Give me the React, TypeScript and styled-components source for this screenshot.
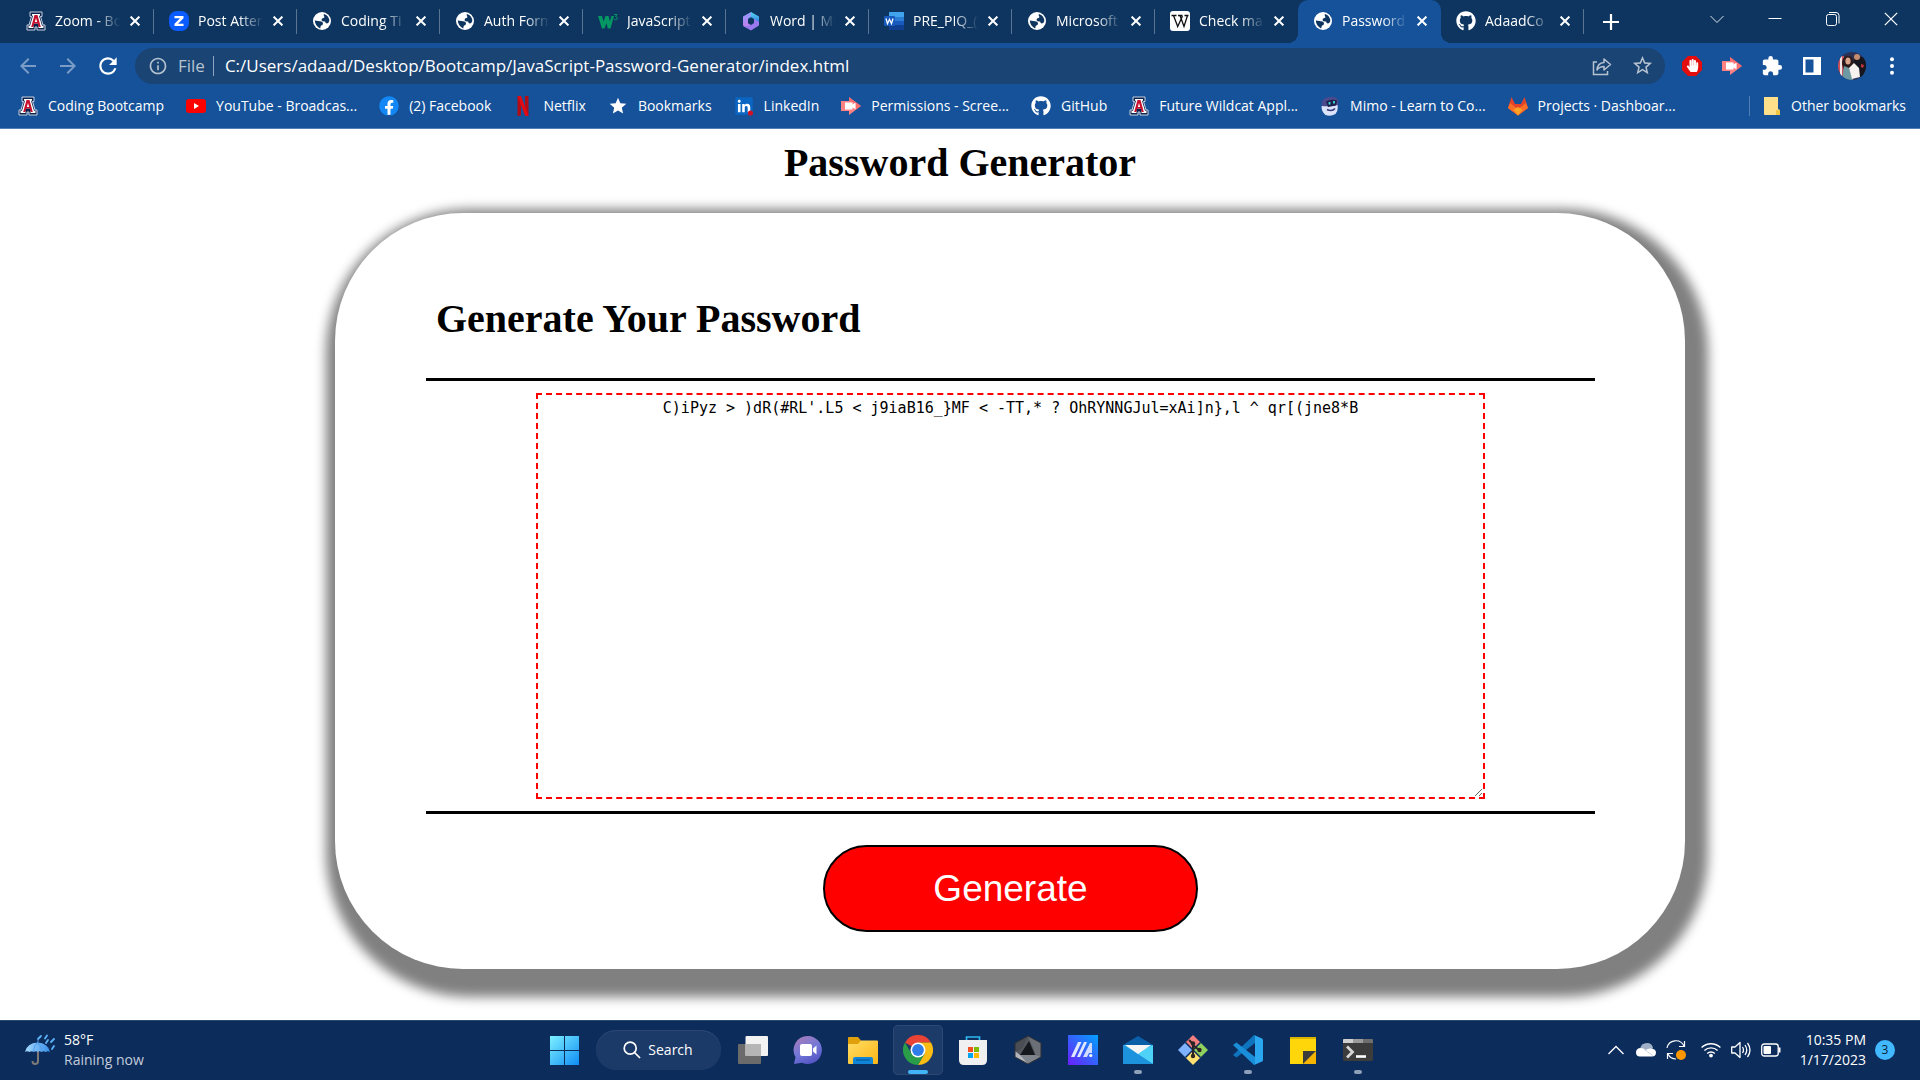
import React, { useState } from "react";
import styled, { createGlobalStyle, css } from "styled-components";
import { MdArrowBack, MdArrowForward, MdRefresh, MdInfoOutline, MdStarBorder, MdStar, MdExtension } from "react-icons/md";
import { FaGithub, FaFacebook, FaLinkedin, FaHandPaper } from "react-icons/fa";

const ui = `"Open Sans", "Noto Sans", sans-serif`;
const serif = `"Liberation Serif", "Times New Roman", serif`;

const GlobalStyle = createGlobalStyle`
  * { box-sizing: border-box; }
  body { margin: 0; background: #fff; font-family: ${ui}; }
  button { font: inherit; color: inherit; background: none; border: 0; padding: 0; }
  a { color: inherit; text-decoration: none; }
  svg { display: block; flex: none; }
`;

const Screen = styled.div`
  display: flex;
  flex-direction: column;
  min-height: 100vh;
`;

/* ---------- browser frame ---------- */

const Browser = styled.header`
  color: #fff;
  background: #15529a;
  border-bottom: 1px solid #4f7fb5;
`;

const TabStrip = styled.div`
  display: flex;
  align-items: flex-start;
  height: 43px;
  padding-left: 11px;
  background: #0d355f;
`;

const Tab = styled.div<{ $active?: boolean; $divider: boolean }>`
  position: relative;
  display: flex;
  align-items: center;
  flex: 0 1 143px;
  min-width: 0;
  height: 43px;
  padding: 0 9px 2px 15px;
  border-radius: 10px 10px 0 0;
  font-size: 14px;
  line-height: 20px;
  ${(p) =>
    p.$divider &&
    css`
      background: linear-gradient(#5a7593, #5a7593) right center / 1px 25px no-repeat;
    `}
  ${(p) =>
    p.$active &&
    css`
      background: #15529a;
      &::before,
      &::after {
        content: "";
        position: absolute;
        bottom: 0;
        width: 10px;
        height: 10px;
      }
      &::before {
        left: -10px;
        background: radial-gradient(circle at 0 0, transparent 10px, #15529a 10px);
      }
      &::after {
        right: -10px;
        background: radial-gradient(circle at 100% 0, transparent 10px, #15529a 10px);
      }
    `}
`;

const TabTitle = styled.button`
  display: flex;
  align-items: center;
  gap: 9px;
  flex: 1;
  min-width: 0;
  text-align: left;
`;

const TabText = styled.span`
  flex: 1;
  min-width: 0;
  overflow: hidden;
  white-space: nowrap;
  mask-image: linear-gradient(90deg, #000 60%, transparent 96%);
`;

const CloseButton = styled.button`
  display: grid;
  place-items: center;
  width: 20px;
  height: 20px;
  margin-left: 2px;
`;

const NewTab = styled.button`
  display: grid;
  place-items: center;
  width: 36px;
  height: 43px;
  margin-left: 9px;
`;

const WindowControls = styled.div`
  display: flex;
  margin-left: auto;
`;

const WindowButton = styled.button`
  display: grid;
  place-items: center;
  width: 58px;
  height: 37px;
`;

const Toolbar = styled.div`
  display: flex;
  align-items: center;
  height: 45px;
  padding: 0 8px;
`;

const ToolButton = styled.button<{ $dim?: boolean }>`
  display: grid;
  place-items: center;
  width: 40px;
  height: 36px;
  color: ${(p) => (p.$dim ? "#7a9cc6" : "#fff")};
`;

const Omnibox = styled.form`
  display: flex;
  align-items: center;
  flex: 1;
  height: 36px;
  margin: 0 7px;
  padding: 0 3px 0 13px;
  border-radius: 18px;
  background: #1a4474;
  color: #b6c2d0;
  font-size: 17px;
`;

const Scheme = styled.span`
  margin-left: 10px;
  padding-right: 8px;
  border-right: 1px solid #8fa5bf;
  line-height: 20px;
`;

const Address = styled.input`
  flex: 1;
  min-width: 0;
  height: 28px;
  padding: 0 0 0 11px;
  border: 0;
  outline: 0;
  background: transparent;
  color: #fff;
  font: 17px/28px ${ui};
`;

const BookmarkBar = styled.nav`
  display: flex;
  align-items: center;
  gap: 22px;
  height: 40px;
  padding: 0 14px 4px 18px;
  font-size: 14px;
  line-height: 20px;
`;

const Bookmark = styled.a`
  display: flex;
  align-items: center;
  gap: 10px;
  white-space: nowrap;
`;

const OtherBookmarks = styled(Bookmark)`
  margin-left: auto;
  padding-left: 13px;
  border-left: 1px solid #4f7fb5;
`;

/* ---------- web page ---------- */

const Page = styled.main`
  flex: 1;
  overflow: hidden;
  padding: 11px 0 51px;
  color: #000;
`;

const Title = styled.h1`
  margin: 0;
  font: bold 40px/46px ${serif};
  text-align: center;
`;

const Card = styled.section`
  margin: 27px 235px 0 335px;
  padding: 83px 90px 37px 91px;
  border-radius: 128px;
  background: #fff;
  box-shadow: 7px 12px 12px 16px #808080;
`;

const CardTitle = styled.h2`
  margin: 0 0 36px;
  padding-left: 10px;
  font: bold 40px/46px ${serif};
`;

const Rule = styled.hr`
  height: 3px;
  margin: 0;
  border: 0;
  background: #000;
`;

const PasswordBox = styled.div`
  display: flex;
  padding: 12px 110px;
`;

const PasswordArea = styled.textarea`
  flex: 1;
  min-width: 0;
  height: 406px;
  padding: 3px;
  border: 2px dashed #f00;
  outline: 0;
  background: #fff;
  color: #000;
  font: 15px/20px "DejaVu Sans Mono", "Liberation Mono", monospace;
  text-align: center;
`;

const Actions = styled.div`
  display: flex;
  justify-content: center;
  padding-top: 31px;
`;

const GenerateButton = styled.button`
  width: 375px;
  height: 87px;
  border: 2px solid #000;
  border-radius: 44px;
  background: #f00;
  color: #fff;
  font: 37px/44px "Liberation Sans", Arial, sans-serif;
`;

/* ---------- taskbar ---------- */

const Taskbar = styled.footer`
  display: grid;
  grid-template-columns: 1fr auto 1fr;
  align-items: center;
  height: 60px;
  box-shadow: inset 0 1px 0 #274b6e;
  background: #0c2c5c;
  color: #fff;
  font-size: 14px;
  line-height: 20px;
`;

const Weather = styled.button`
  display: flex;
  align-items: center;
  gap: 8px;
  padding-left: 24px;
  text-align: left;
`;

const Muted = styled.span`
  display: block;
  color: #c3cddb;
`;

const Dock = styled.nav`
  display: flex;
  align-items: center;
  gap: 5px;
  padding-left: 1px;
`;

const DockButton = styled.button<{ $active?: boolean }>`
  position: relative;
  display: grid;
  place-items: center;
  width: 50px;
  height: 50px;
  border-radius: 5px;
  ${(p) =>
    p.$active &&
    css`
      background: #1d3b69;
      box-shadow: inset 0 0 0 1px #2b4873;
    `}
`;

const Indicator = styled.span<{ $active?: boolean }>`
  position: absolute;
  bottom: 1px;
  left: 50%;
  width: ${(p) => (p.$active ? 20 : 8)}px;
  height: 4px;
  border-radius: 2px;
  background: ${(p) => (p.$active ? "#41b5f8" : "#8e9fb9")};
  transform: translateX(-50%);
`;

const Search = styled.button`
  display: flex;
  align-items: center;
  justify-content: center;
  gap: 7px;
  width: 125px;
  height: 40px;
  margin: 0 2px;
  border-radius: 20px;
  background: #1c3a68;
  box-shadow: inset 0 1px 0 #2b4873;
`;

const Tray = styled.div`
  display: flex;
  align-items: center;
  justify-content: flex-end;
  padding-right: 25px;
`;

const TrayButton = styled.button`
  display: grid;
  place-items: center;
  width: 30px;
  height: 40px;
`;

const TrayGroup = styled.div`
  display: flex;
  margin-left: 5px;
`;

const Clock = styled.time`
  min-width: 80px;
  text-align: right;
`;

const Badge = styled.span`
  display: grid;
  place-items: center;
  width: 20px;
  height: 20px;
  margin-left: 9px;
  border-radius: 50%;
  background: #41b8ff;
  color: #0a2238;
  font-size: 12px;
`;

/* ---------- drawings ---------- */

const WildcatIcon = () => (
  <svg width="20" height="20" viewBox="0 0 20 20">
    <path d="M4 1h12v4.500h-1.500L17 14h2v5h-8v-3H9v3H1v-5h2l2.500-8.500H4z" fill="#0c234b" stroke="#c9d3e2" strokeWidth="1" />
    <path d="M6 3h8v1.800h-1l3 10h1.500v2.200h-5v-2.200h.6l-.6-2.200H7.500l-.6 2.200h.6V17h-5v-2.200H4l3-10H6z" fill="#fff" />
    <path d="M8.500 4h3l3.300 12h-2l-1-3.600H8.200L7.200 16h-2zM10 7l-1.200 4h2.400z" fill="#c8102e" />
  </svg>
);

const GlobeIcon = () => (
  <svg width="20" height="20" viewBox="0 0 20 20">
    <circle cx="10" cy="10" r="9" fill="#fff" />
    <path d="M2.800 9.600L8 10.300q3 .4 3 2.500 0 1.600-2.200 2l-.6 2.600Q3.200 15.500 2.800 9.600z" fill="#0d355f" />
    <path d="M12 3q5 1.500 5.300 7-.6 2.300-2.300 2.400-1.700-.2-1.900-2-3.300.2-3.600-1.500.1-1.700 2-1.900 1.700-.4.500-2-.8-1 0-2z" fill="#0d355f" />
  </svg>
);

const ZoomIcon = () => (
  <svg width="20" height="20" viewBox="0 0 20 20">
    <rect width="20" height="20" rx="8" fill="#0b5cff" />
    <path d="M5.500 5h9v2.300l-5.500 5.400h5.500V15h-9v-2.300L11 7.300H5.500z" fill="#fff" />
  </svg>
);

const W3Icon = () => (
  <svg width="20" height="20" viewBox="0 0 20 20">
    <path d="M0 5h4l1.500 5.500L7.500 5h3l1.500 5.500L13.500 5H16l-3.500 12.500h-2.700L8.500 12l-2 5.500H4z" fill="#059862" />
    <path d="M16 3.500h3l-1.500 2q1.800.2 1.800 1.800-.1 1.500-1.800 1.500-1 0-1.600-.7" fill="none" stroke="#059862" strokeWidth="1" />
  </svg>
);

const OfficeIcon = () => (
  <svg width="20" height="20" viewBox="0 0 20 20">
    <defs>
      <linearGradient id="office-a" x1="0" y1="0" x2="0" y2="1"><stop stopColor="#8f9cff" /><stop offset="1" stopColor="#c77be8" /></linearGradient>
      <linearGradient id="office-b" x1="0" y1="0" x2="0" y2="1"><stop stopColor="#4fdcf0" /><stop offset="1" stopColor="#3c6de0" /></linearGradient>
    </defs>
    <path d="M10 1L2 5.500v9l4 2.500 4-3-3-2V8l5-3z" fill="url(#office-a)" />
    <path d="M10 1l8 4.500v7l-5-2V8L7 8l3-3z" fill="url(#office-b)" />
    <path d="M18 11v3.500L10 19.500 2 15h5l6-4V8z" fill="#9a78ee" />
    <path d="M7 8l3-1.800L13 8v4l-3 2-3-2z" fill="#0d355f" />
  </svg>
);

const WordIcon = () => (
  <svg width="20" height="20" viewBox="0 0 20 20">
    <rect x="5" y="1" width="15" height="18" rx="1" fill="#2b7cd3" />
    <rect x="5" y="1" width="15" height="5" rx="1" fill="#41a5ee" />
    <rect x="5" y="10" width="15" height="5" fill="#185abd" />
    <rect x="5" y="14" width="15" height="5" rx="1" fill="#103f91" />
    <rect y="5" width="11" height="10" rx="1" fill="#185abd" />
    <path d="M2 7.500l1.500 5.200 2-4.400 2 4.400L9 7.500" fill="none" stroke="#fff" strokeWidth="1.300" />
  </svg>
);

const WikiIcon = () => (
  <svg width="20" height="20" viewBox="0 0 20 20">
    <rect width="20" height="20" rx="3" fill="#fff" />
    <path d="M1.500 4.500h5M8 4.500h4.500M14.500 4.500h4M3.500 4.500l4.200 11L12.500 5M10 4.500l4 11 3.500-11" fill="none" stroke="#111" strokeWidth="1.300" />
  </svg>
);

const YoutubeIcon = () => (
  <svg width="20" height="20" viewBox="0 0 20 20">
    <rect y="3" width="20" height="14" rx="3" fill="#f00" />
    <path d="M8 7l5 3-5 3z" fill="#fff" />
  </svg>
);

const FacebookIcon = () => (
  <svg width="20" height="20" viewBox="0 0 20 20">
    <circle cx="10" cy="10" r="9" fill="#fff" />
    <FaFacebook x="0" y="0" size={20} color="#1287f5" />
  </svg>
);

const NetflixIcon = () => (
  <svg width="20" height="20" viewBox="0 0 20 20">
    <path d="M4.500 0H8v19.500l-3.500.5zM12 0h3.500v20l-3.500-.5z" fill="#b00d16" />
    <path d="M4.500 0H8l7.500 20-3.500-.5z" fill="#e50914" />
  </svg>
);

const LinkedInIcon = () => (
  <svg width="20" height="20" viewBox="0 0 20 20">
    <rect x="3" y="3" width="14" height="14" fill="#fff" />
    <FaLinkedin x="0" y="0" size={20} color="#0a66c2" />
    <circle cx="16.500" cy="17" r="2.600" fill="#d11124" />
  </svg>
);

const CastIcon = () => (
  <svg width="20" height="20" viewBox="0 0 20 20">
    <path d="M0 5h8V1l12 9-12 9v-4H0z" fill="#ff8282" />
    <path d="M4 6.500h7.500v2l3-1.700v6.400l-3-1.700v2H4z" fill="#fff" />
    <path d="M8 1l12 9-5 3.500V7L8 5z" fill="#f4555a" opacity="0.500" />
  </svg>
);

const MimoIcon = () => (
  <svg width="20" height="20" viewBox="0 0 20 20">
    <path d="M1.500 8Q2 2 9 1q7-1 9 3 1 4-1 8L3 13z" fill="#4a4a8c" />
    <path d="M1.500 10q8 1 16-1 1 6-2 9-5 3-10 1-4-3-4-9z" fill="#dce4fa" />
    <path d="M6 5.500q6-3 11-1l-1 5-8 1.500z" fill="#1f1d4d" />
    <path d="M9.500 6v2.500M14 5v2.500" stroke="#37e2d5" strokeWidth="1.800" />
    <path d="M7 13.500q5 2.500 8-1" fill="none" stroke="#34347a" strokeWidth="1.600" />
  </svg>
);

const GitlabIcon = () => (
  <svg width="20" height="20" viewBox="0 0 20 20">
    <path d="M3.500 1L7 8h6l3.500-7L20 12 10 19.500 0 12z" fill="#e24329" />
    <path d="M0 12l2-5 8 6 8-6 2 5-10 7.500z" fill="#fc6d26" />
    <path d="M5.500 13.500L10 11l4.500 2.500L10 19.500z" fill="#fca326" />
  </svg>
);

const FolderIcon = () => (
  <svg width="18" height="20" viewBox="0 0 18 20">
    <path d="M1 1h14v12l2 1v5H2q-1 0-1-1z" fill="#ffe08a" />
    <path d="M13 19v-4q0-1 1-1h3v5z" fill="#f3c544" />
  </svg>
);

const AdblockIcon = () => (
  <svg width="20" height="20" viewBox="0 0 20 20">
    <path d="M6 0h8l6 6v8l-6 6H6l-6-6V6z" fill="#e40d0d" />
    <FaHandPaper x="4" y="3" size={13} color="#fff" />
  </svg>
);

const ShareIcon = () => (
  <svg width="20" height="20" viewBox="0 0 20 20" fill="none" stroke="#b6c2d0" strokeWidth="1.500">
    <path d="M5 6H1.500v12.500h14V15" />
    <path d="M5 14q.5-7 7-7.500V3l6.500 5.500L12 14v-3.500q-4.500 0-7 3.500z" strokeLinejoin="round" />
  </svg>
);

const AvatarIcon = () => (
  <svg width="28" height="28" viewBox="0 0 28 28">
    <defs><clipPath id="avatar"><circle cx="14" cy="14" r="14" /></clipPath></defs>
    <g clipPath="url(#avatar)">
      <rect width="28" height="28" fill="#2c3154" />
      <path d="M0 4h6v20H0z" fill="#c9525c" />
      <path d="M2 4h2v20H2z" fill="#f0e6e6" />
      <path d="M16 5h12v20H16z" fill="#17151d" />
      <circle cx="19" cy="5" r="3" fill="#c58c70" />
      <path d="M4 12q0-8 6-8t6 8l-2 6H6z" fill="#2b1b1c" />
      <ellipse cx="10" cy="9" rx="2.600" ry="3.500" fill="#d9a48a" />
      <path d="M4 28l2-14 5 2 4 12z" fill="#6d9aa2" />
      <path d="M11 16l5-5 5 5 1 9-8 2z" fill="#f5f2f0" />
      <path d="M23 12l3 1-1 3-2-1z" fill="#c73540" />
    </g>
  </svg>
);

const CloseIcon = ({ size = 10, width = 2 }: { size?: number; width?: number }) => (
  <svg width={size} height={size} viewBox="0 0 10 10" stroke="#fff" strokeWidth={width}>
    <path d="M.6.600l8.800 8.800M9.400.600L.600 9.400" />
  </svg>
);

const UmbrellaIcon = () => (
  <svg width="32" height="32" viewBox="0 0 32 32">
    <defs><linearGradient id="umb"><stop stopColor="#a5dbff" /><stop offset="1" stopColor="#3a8fe8" /></linearGradient></defs>
    <path d="M14 17v10q0 3-3 3-2.500 0-2.500-3" fill="none" stroke="#7d7a78" strokeWidth="2" />
    <path d="M1 18Q3 9 13.500 8.500 24 9 26 18q-2-1.500-4.500 0-2-1.500-4 0-2-1.500-3.800 0-2-1.500-4 0-2-1.500-4.200 0Q3 16.500 1 18z" fill="url(#umb)" />
    <path d="M14 6v3M9.500 17.500Q10 11 13.500 9q4 2 4 8.500" stroke="#4e9bea" strokeWidth="1" fill="none" />
    <path d="M17 2l-3 3M23 1.500l-2 3M30 5l-3 3M24 6l-2 3M30 12l-2 3" stroke="#5db4f7" strokeWidth="1.800" strokeLinecap="round" />
  </svg>
);

const StartIcon = () => (
  <svg width="30" height="30" viewBox="0 0 30 30">
    <defs><linearGradient id="start" x2="1" y2="1"><stop stopColor="#7df1ff" /><stop offset="1" stopColor="#0f8cf5" /></linearGradient></defs>
    <path d="M1 1h14v14H1zM16 1h14v14H16zM1 16h14v14H1zM16 16h14v14H16z" fill="url(#start)" />
  </svg>
);

const TaskViewIcon = () => (
  <svg width="30" height="30" viewBox="0 0 30 30">
    <rect y="9" width="23" height="20" rx="1" fill="#6b6b6b" />
    <rect x="7.500" y="1" width="22.500" height="20" rx="1" fill="#f2f2f2" />
    <rect x="7.500" y="9" width="15.500" height="12" fill="#b5b5b5" />
  </svg>
);

const ChatIcon = () => (
  <svg width="30" height="30" viewBox="0 0 30 30">
    <defs><linearGradient id="chat" x1="0.200" y1="0" x2="0.700" y2="1"><stop stopColor="#a77cb8" /><stop offset=".5" stopColor="#7478d8" /><stop offset="1" stopColor="#5252c4" /></linearGradient></defs>
    <path d="M15 1a14 14 0 1 1-6 26.700L1 29l1.500-7A14 14 0 0 1 15 1z" fill="url(#chat)" />
    <rect x="7" y="9" width="12" height="12" rx="2" fill="#fff" />
    <path d="M20 13.500l3.500-3v9l-3.500-3z" fill="#fff" />
  </svg>
);

const ExplorerIcon = () => (
  <svg width="30" height="30" viewBox="0 0 30 30">
    <defs><linearGradient id="exp" x2="1" y2="1"><stop stopColor="#ffdd65" /><stop offset="1" stopColor="#fbb615" /></linearGradient></defs>
    <path d="M0 3q0-1 1-1h9l3 3.500V9H0z" fill="#e0a00c" />
    <path d="M0 9h10l3-3.500h16q1 0 1 1V28q0 1-1 1H1q-1 0-1-1z" fill="url(#exp)" />
    <path d="M5 29v-5q0-2 2-2h16q2 0 2 2v5z" fill="#1185d8" />
    <path d="M8 25h14" stroke="#075a9e" strokeWidth="1.200" />
  </svg>
);

const ChromeIcon = () => (
  <svg width="30" height="30" viewBox="0 0 30 30">
    <path d="M15 15L2 7.500A15 15 0 0 1 28 7.500H15z" fill="#ea4335" />
    <path d="M28 7.500A15 15 0 0 1 15 30l6.500-11.200L15 7.500z" fill="#fbbc14" />
    <path d="M15 30A15 15 0 0 1 2 7.500l6.500 11.300 13 0z" fill="#2a9d48" />
    <circle cx="15" cy="15" r="7.500" fill="#fff" />
    <circle cx="15" cy="15" r="5.900" fill="#2f7de9" />
  </svg>
);

const StoreIcon = () => (
  <svg width="30" height="30" viewBox="0 0 30 30">
    <path d="M8.500 7V2h13v5" fill="none" stroke="#2fb6ee" strokeWidth="1.700" />
    <path d="M1 5h28v20q0 5-5 5H6q-5 0-5-5z" fill="#f0f0f0" />
    <path d="M10 12h5v5h-5z" fill="#f25022" />
    <path d="M16 12h5v5h-5z" fill="#7fba00" />
    <path d="M10 18h5v5h-5z" fill="#00a4ef" />
    <path d="M16 18h5v5h-5z" fill="#ffb900" />
  </svg>
);

const CrateIcon = () => (
  <svg width="30" height="30" viewBox="0 0 30 30">
    <path d="M15 1l13 7v14l-13 7-13-7V8z" fill="#55585e" />
    <path d="M15 1L2 8v9l7-3z" fill="#4a4d53" />
    <path d="M15 1l13 7v14l-5-2z" fill="#6b6f76" />
    <path d="M2 22l5-2h16l5 2-13 7z" fill="#7f848c" />
    <path d="M2 16l5 4 8 9-13-7z" fill="#b3b7bd" />
    <path d="M16 6l6 14-15 0z" fill="#15181c" />
    <path d="M15 1l13 7v14l-13 7-13-7V8z" fill="none" stroke="#2c2f34" strokeWidth="1" />
  </svg>
);

const AsusIcon = () => (
  <svg width="30" height="30" viewBox="0 0 30 30">
    <defs><linearGradient id="asus" x1="0" y1="1" x2="1" y2="0"><stop stopColor="#6a1ffb" /><stop offset="1" stopColor="#00a2ff" /></linearGradient></defs>
    <rect width="30" height="30" fill="url(#asus)" />
    <path d="M3 22L10 7h3.500l-7 15zM9 22l7-15h3l-7 15z" fill="#dfe8ff" />
    <path d="M15 22l7-14h2v10h-3l-2 4z" fill="#cfdcff" />
    <circle cx="22.800" cy="20.500" r="1.600" fill="#fff" />
  </svg>
);

const MailIcon = () => (
  <svg width="30" height="30" viewBox="0 0 30 30">
    <path d="M0 10L15 1l15 9v3H0z" fill="#0a5ea8" />
    <path d="M0 10h30v19H0z" fill="#2aa6e6" />
    <path d="M30 10v19L12 18z" fill="#4fd2f7" />
    <path d="M0 10l15 9 15 10H0z" fill="#1c93dc" />
    <path d="M2 10h26l-13 9z" fill="#f4f4f4" />
  </svg>
);

const GitIcon = () => (
  <svg width="30" height="30" viewBox="0 0 30 30">
    <path d="M15 0l7.500 7.500L15 15 7.500 7.500z" fill="#f47f7f" />
    <path d="M22.500 7.500L30 15l-7.500 7.500L15 15z" fill="#8fd15f" />
    <path d="M7.500 7.500L15 15l-7.500 7.500L0 15z" fill="#80b3ff" />
    <path d="M15 15l7.500 7.500L15 30l-7.500-7.500z" fill="#ffe070" />
    <path d="M7.500 7.500l15 15M22.500 7.500l-15 15" stroke="#0c2c5c" strokeWidth="1.500" />
    <path d="M11 5l4 4v12M15 10l6 5" stroke="#2b2424" strokeWidth="2" fill="none" />
    <circle cx="15" cy="8.500" r="2.200" fill="#2b2424" />
    <circle cx="15" cy="21" r="2.200" fill="#2b2424" />
    <circle cx="21.500" cy="15" r="2.200" fill="#2b2424" />
  </svg>
);

const CodeIcon = () => (
  <svg width="30" height="30" viewBox="0 0 30 30">
    <path d="M22 8L3.500 22.500 0 20 21 0l1 1z" fill="#0e74bd" />
    <path d="M22 22L3.500 7.500 0 10 21 30l1-1z" fill="#1a8ed8" />
    <path d="M21 0l8 3.500q1 .5 1 1.500v20q0 1-1 1.500L21 30l1-1.500v-27z" fill="#2ba7ef" />
  </svg>
);

const NotesIcon = () => (
  <svg width="30" height="30" viewBox="0 0 30 30">
    <path d="M2 3h26v13L15 29H2z" fill="#ffd60a" />
    <path d="M2 2h26v2H2z" fill="#d9b500" />
    <path d="M15 16h13L15 29z" fill="#3b3b3b" />
    <path d="M28 16v13H15z" fill="#f5b400" />
  </svg>
);

const TerminalIcon = () => (
  <svg width="30" height="30" viewBox="0 0 30 30">
    <rect y="4" width="30" height="22" rx="1.500" fill="#3c3c3c" />
    <path d="M0 8V5q0-1 1-1h9v4z" fill="#cfcfcf" />
    <path d="M10 4h10v4H10z" fill="#9b9b9b" />
    <path d="M20 4h9q1 0 1 1v3H20z" fill="#6e6e6e" />
    <path d="M4 11.500l5.500 5.500L4 22.500" fill="none" stroke="#d6d6d6" strokeWidth="2.800" />
    <path d="M13 21.500h10" stroke="#fff" strokeWidth="2.600" />
  </svg>
);

const tabs = [
  { icon: <WildcatIcon />, text: "Zoom - Bo" },
  { icon: <ZoomIcon />, text: "Post Atter" },
  { icon: <GlobeIcon />, text: "Coding Ti" },
  { icon: <GlobeIcon />, text: "Auth Form" },
  { icon: <W3Icon />, text: "JavaScript" },
  { icon: <OfficeIcon />, text: "Word | Mi" },
  { icon: <WordIcon />, text: "PRE_PIQ_(" },
  { icon: <GlobeIcon />, text: "Microsoft" },
  { icon: <WikiIcon />, text: "Check ma" },
  { icon: <GlobeIcon />, text: "Password" },
  { icon: <FaGithub size={20} />, text: "AdaadCo" },
];
const activeTab = 9;

const bookmarks = [
  { icon: <WildcatIcon />, text: "Coding Bootcamp" },
  { icon: <YoutubeIcon />, text: "YouTube - Broadcas..." },
  { icon: <FacebookIcon />, text: "(2) Facebook" },
  { icon: <NetflixIcon />, text: "Netflix" },
  { icon: <MdStar size={20} />, text: "Bookmarks" },
  { icon: <LinkedInIcon />, text: "LinkedIn" },
  { icon: <CastIcon />, text: "Permissions - Scree..." },
  { icon: <FaGithub size={20} />, text: "GitHub" },
  { icon: <WildcatIcon />, text: "Future Wildcat Appl..." },
  { icon: <MimoIcon />, text: "Mimo - Learn to Co..." },
  { icon: <GitlabIcon />, text: "Projects · Dashboar..." },
];

const apps = [
  { name: "Task View", icon: <TaskViewIcon /> },
  { name: "Chat", icon: <ChatIcon /> },
  { name: "File Explorer", icon: <ExplorerIcon /> },
  { name: "Google Chrome", icon: <ChromeIcon />, active: true },
  { name: "Microsoft Store", icon: <StoreIcon /> },
  { name: "Armoury Crate", icon: <CrateIcon /> },
  { name: "MyASUS", icon: <AsusIcon /> },
  { name: "Mail", icon: <MailIcon />, running: true },
  { name: "Git", icon: <GitIcon /> },
  { name: "Visual Studio Code", icon: <CodeIcon />, running: true },
  { name: "Sticky Notes", icon: <NotesIcon /> },
  { name: "Terminal", icon: <TerminalIcon />, running: true },
];

const first = "C)iPyz > )dR(#RL'.L5 < j9iaB16_}MF < -TT,* ? OhRYNNGJul=xAi]n},l ^ qr[(jne8*B";
const symbols = "ABCDEFGHIJKLMNOPQRSTUVWXYZabcdefghijklmnopqrstuvwxyz0123456789!#$%&()*+,-./=?[]^_{}";

const makePassword = (length: number) =>
  Array.from({ length }, () => symbols[Math.floor(Math.random() * symbols.length)]).join("");

export default function App() {
  const [password, setPassword] = useState(first);

  return (
    <Screen>
      <GlobalStyle />
      <Browser>
        <TabStrip>
          {tabs.map((tab, i) => (
            <Tab key={i} $active={i === activeTab} $divider={i !== activeTab && i !== activeTab - 1}>
              <TabTitle>
                {tab.icon}
                <TabText>{tab.text}</TabText>
              </TabTitle>
              <CloseButton aria-label="Close tab">
                <CloseIcon />
              </CloseButton>
            </Tab>
          ))}
          <NewTab aria-label="New tab">
            <svg width="16" height="16" viewBox="0 0 16 16" stroke="#fff" strokeWidth="2.200"><path d="M8 0v16M0 8h16" /></svg>
          </NewTab>
          <WindowControls>
            <WindowButton aria-label="Search tabs">
              <svg width="14" height="14" viewBox="0 0 14 14" fill="none" stroke="#dbe3ec"><path d="M.5 4L7 10.500 13.500 4" /></svg>
            </WindowButton>
            <WindowButton aria-label="Minimize">
              <svg width="14" height="14" viewBox="0 0 14 14" stroke="#fff"><path d="M.5 6.500h13" /></svg>
            </WindowButton>
            <WindowButton aria-label="Restore">
              <svg width="14" height="14" viewBox="0 0 14 14" fill="none" stroke="#fff"><rect x=".5" y="2.500" width="10" height="11" rx="2" /><path d="M3 .5h7q3 0 3 3v8" /></svg>
            </WindowButton>
            <WindowButton aria-label="Close window">
              <CloseIcon size={14} width={0.9} />
            </WindowButton>
          </WindowControls>
        </TabStrip>

        <Toolbar>
          <ToolButton $dim aria-label="Back"><MdArrowBack size={24} /></ToolButton>
          <ToolButton $dim aria-label="Forward"><MdArrowForward size={24} /></ToolButton>
          <ToolButton aria-label="Reload"><MdRefresh size={26} /></ToolButton>
          <Omnibox onSubmit={(e) => e.preventDefault()}>
            <MdInfoOutline size={20} />
            <Scheme>File</Scheme>
            <Address aria-label="Address" defaultValue="C:/Users/adaad/Desktop/Bootcamp/JavaScript-Password-Generator/index.html" />
            <ToolButton type="button" aria-label="Share"><ShareIcon /></ToolButton>
            <ToolButton type="button" aria-label="Bookmark this tab"><MdStarBorder size={23} color="#b6c2d0" /></ToolButton>
          </Omnibox>
          <ToolButton aria-label="Ad blocker"><AdblockIcon /></ToolButton>
          <ToolButton aria-label="Screen recorder"><CastIcon /></ToolButton>
          <ToolButton aria-label="Extensions"><MdExtension size={22} /></ToolButton>
          <ToolButton aria-label="Side panel">
            <svg width="18" height="18" viewBox="0 0 18 18"><path d="M0 0h18v18H0zM2.500 2.500v13h8v-13z" fill="#fff" fillRule="evenodd" /></svg>
          </ToolButton>
          <ToolButton aria-label="Profile"><AvatarIcon /></ToolButton>
          <ToolButton aria-label="Menu">
            <svg width="4" height="18" viewBox="0 0 4 18" fill="#fff"><circle cx="2" cy="2.200" r="2" /><circle cx="2" cy="9" r="2" /><circle cx="2" cy="15.800" r="2" /></svg>
          </ToolButton>
        </Toolbar>

        <BookmarkBar>
          {bookmarks.map((b) => (
            <Bookmark href="#" key={b.text}>
              {b.icon}
              {b.text}
            </Bookmark>
          ))}
          <OtherBookmarks href="#">
            <FolderIcon />
            Other bookmarks
          </OtherBookmarks>
        </BookmarkBar>
      </Browser>

      <Page>
        <Title>Password Generator</Title>
        <Card>
          <CardTitle>Generate Your Password</CardTitle>
          <Rule />
          <PasswordBox>
            <PasswordArea aria-label="Your password" readOnly spellCheck={false} value={password} />
          </PasswordBox>
          <Rule />
          <Actions>
            <GenerateButton onClick={() => setPassword(makePassword(64))}>Generate</GenerateButton>
          </Actions>
        </Card>
      </Page>

      <Taskbar>
        <Weather>
          <UmbrellaIcon />
          <span>
            58°F
            <Muted>Raining now</Muted>
          </span>
        </Weather>
        <Dock>
          <DockButton aria-label="Start"><StartIcon /></DockButton>
          <Search>
            <svg width="18" height="18" viewBox="0 0 18 18" fill="none" stroke="#fff" strokeWidth="1.700"><circle cx="7.200" cy="7.200" r="6" /><path d="M11.500 11.500L17 17" /></svg>
            Search
          </Search>
          {apps.map((app) => (
            <DockButton key={app.name} aria-label={app.name} $active={app.active}>
              {app.icon}
              {(app.active || app.running) && <Indicator $active={app.active} />}
            </DockButton>
          ))}
        </Dock>
        <Tray>
          <TrayButton aria-label="Hidden icons">
            <svg width="16" height="10" viewBox="0 0 16 10" fill="none" stroke="#fff" strokeWidth="1.300"><path d="M.5 9L8 1.500 15.500 9" /></svg>
          </TrayButton>
          <TrayButton aria-label="OneDrive">
            <svg width="20" height="14" viewBox="0 0 20 14"><path d="M4 6q1-6 7-6 5 0 6 5l-4 4H4z" fill="#9fb0c8" /><path d="M4 13.500q-4 0-4-4t4-4.500q4 0 6 2 2-2 5-1.500 5 .5 5 4.300 0 3.700-4 3.700z" fill="#fff" /><path d="M8 6.500l9 6" stroke="#cdd7e4" strokeWidth="1" /></svg>
          </TrayButton>
          <TrayButton aria-label="Windows Update">
            <svg width="20" height="20" viewBox="0 0 20 20" fill="none" stroke="#fff" strokeWidth="1.200"><path d="M1 8a9 9 0 0 1 17-2M18.500 1v5.500H13M1.500 19v-5.500H7M2 14a9 9 0 0 0 8 5" /><circle cx="15" cy="15" r="5" fill="#ff9800" stroke="none" /></svg>
          </TrayButton>
          <TrayGroup>
            <TrayButton aria-label="Wi-Fi">
              <svg width="20" height="16" viewBox="0 0 20 16" fill="none" stroke="#fff" strokeWidth="1.400"><path d="M.6 5.500a13.500 13.500 0 0 1 18.800 0M3.400 8.500a9.500 9.500 0 0 1 13.200 0M6.200 11.500a5.500 5.500 0 0 1 7.600 0" /><circle cx="10" cy="13.600" r="1.900" fill="#fff" stroke="none" /></svg>
            </TrayButton>
            <TrayButton aria-label="Volume">
              <svg width="20" height="18" viewBox="0 0 20 18" fill="none" stroke="#fff" strokeWidth="1.300"><path d="M.7 6h3.300L9 1.500v15L4 12H.7zM11.500 6q2 3 0 6M14 4q3.500 5 0 10M16.500 2q5 7 0 14" strokeLinejoin="round" /></svg>
            </TrayButton>
            <TrayButton aria-label="Battery">
              <svg width="20" height="14" viewBox="0 0 20 14"><rect x=".7" y="1" width="16.500" height="12" rx="2.500" fill="none" stroke="#fff" strokeWidth="1.300" /><rect x="2.500" y="3" width="7.500" height="8" rx="1" fill="#fff" /><path d="M18.500 4.500v5" stroke="#fff" strokeWidth="2" /></svg>
            </TrayButton>
          </TrayGroup>
          <Clock>
            10:35 PM
            <br />
            1/17/2023
          </Clock>
          <Badge>3</Badge>
        </Tray>
      </Taskbar>
    </Screen>
  );
}
